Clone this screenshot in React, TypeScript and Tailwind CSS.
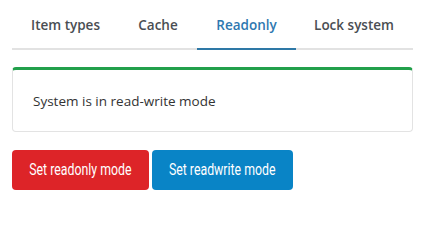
import { useState } from "react";

const tabs = [
  { label: "Item types", width: "w-[107px]" },
  { label: "Cache", width: "w-[78px]" },
  { label: "Readonly", width: "w-[99px]" },
  { label: "Lock system", width: "w-[116px]" },
];

export default function App() {
  const [active, setActive] = useState("Readonly");

  return (
    <div className="ml-3 w-[401px] bg-white font-['Open_Sans',sans-serif]">
      {/* Tabs */}
      <div className="flex border-b-2 border-[#e2e2e2]">
        {tabs.map((tab) => (
          <button
            key={tab.label}
            onClick={() => setActive(tab.label)}
            className={`-mb-[2px] h-[50px] shrink-0 whitespace-nowrap border-b-2 pt-[2px] text-[13.5px] font-semibold ${tab.width} ${
              active === tab.label
                ? "border-[#2e78a6] text-[#2e78b0]"
                : "border-transparent text-[#4a4e53]"
            }`}
          >
            {tab.label}
          </button>
        ))}
      </div>

      {/* Status card */}
      <div className="mt-[17px] flex h-[65px] items-center rounded-[4px] border border-t-[3px] border-[#e3e3e3] border-t-[#22a04b] px-5 pt-[1px] text-[13.5px] text-[#333]">
        System is in read-write mode
      </div>

      {/* Actions */}
      <div className="mt-[18px] flex gap-[3px] font-['Roboto',sans-serif]">
        <button className="flex h-10 w-[137px] items-center justify-center rounded-[4px] bg-[#dd2428] text-[16px] text-white">
          <span className="inline-block scale-x-[0.77]">Set readonly mode</span>
        </button>
        <button className="flex h-10 w-[141px] items-center justify-center rounded-[4px] bg-[#0984c6] text-[16px] text-white">
          <span className="inline-block scale-x-[0.77]">Set readwrite mode</span>
        </button>
      </div>
    </div>
  );
}
